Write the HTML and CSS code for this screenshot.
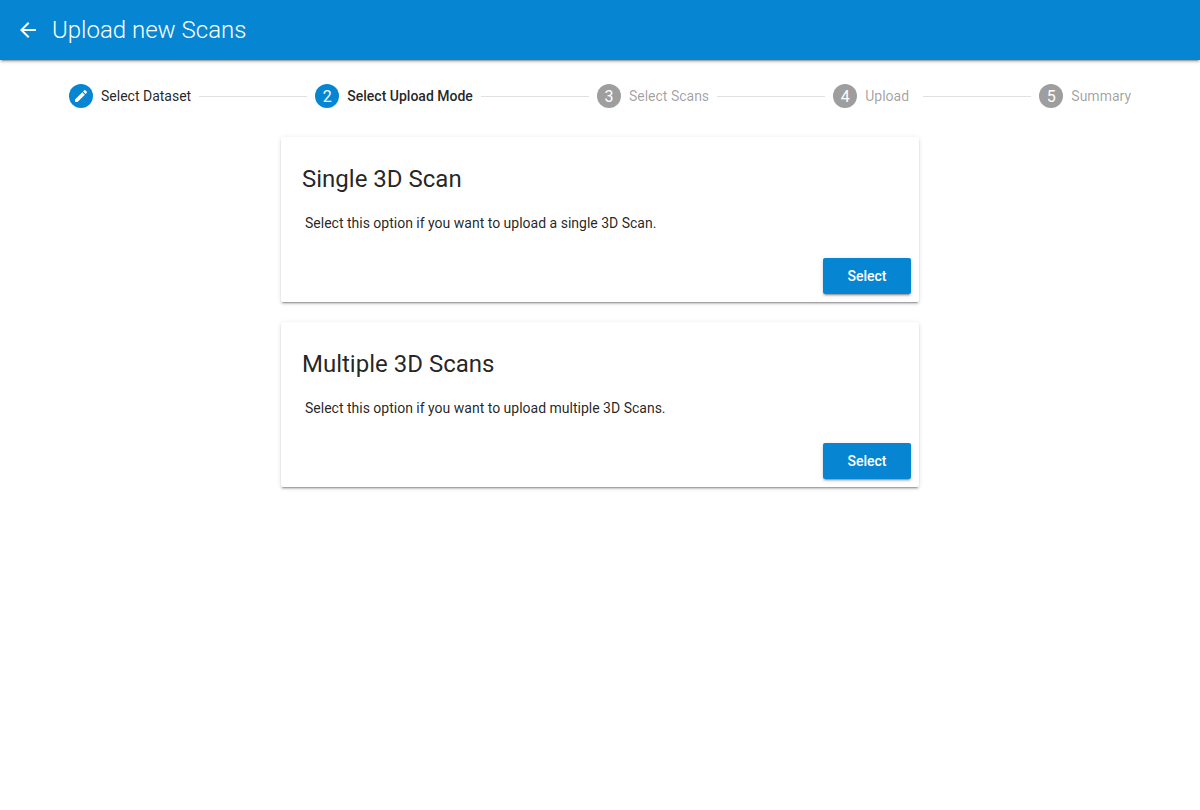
FILE: index.html
```html
<!DOCTYPE html>
<html lang="en">
<head>
<meta charset="utf-8">
<meta name="viewport" content="width=device-width, initial-scale=1">
<title>Upload new Scans</title>
<link rel="stylesheet" href="styles.css">
</head>
<body>
<header class="app-bar">
  <button class="back" type="button" aria-label="Back"><svg viewBox="0 0 24 24"><path d="M20 11H7.83l5.59-5.59L12 4l-8 8 8 8 1.41-1.41L7.83 13H20v-2z"/></svg></button>
  <h1 class="app-title">Upload new Scans</h1>
</header>
<main>
  <ol class="stepper">
    <li class="step done"><span class="badge"><svg viewBox="0 0 24 24"><path d="M3 17.25V21h3.75L17.81 9.94l-3.75-3.75L3 17.25zM20.71 7.04c.39-.39.39-1.02 0-1.41l-2.34-2.34a.996.996 0 0 0-1.41 0l-1.83 1.83 3.75 3.75 1.83-1.83z"/></svg></span><span class="label">Select Dataset</span></li>
    <li class="line" role="presentation"></li>
    <li class="step active" aria-current="step"><span class="badge">2</span><span class="label">Select Upload Mode</span></li>
    <li class="line" role="presentation"></li>
    <li class="step"><span class="badge">3</span><span class="label">Select Scans</span></li>
    <li class="line" role="presentation"></li>
    <li class="step"><span class="badge">4</span><span class="label">Upload</span></li>
    <li class="line" role="presentation"></li>
    <li class="step"><span class="badge">5</span><span class="label">Summary</span></li>
  </ol>
  <div class="cards">
    <section class="card">
      <h2 class="card-title">Single 3D Scan</h2>
      <p class="card-text">Select this option if you want to upload a single 3D Scan.</p>
      <div class="card-actions"><button class="select" type="button">Select</button></div>
    </section>
    <section class="card">
      <h2 class="card-title">Multiple 3D Scans</h2>
      <p class="card-text">Select this option if you want to upload multiple 3D Scans.</p>
      <div class="card-actions"><button class="select" type="button">Select</button></div>
    </section>
  </div>
</main>
</body>
</html>
```
FILE: styles.css
```css
* { box-sizing: border-box; }
body {
  margin: 0;
  background: #fff;
  color: rgba(0, 0, 0, 0.87);
  font-family: Roboto, "Liberation Sans", sans-serif;
  font-size: 14px;
}
.app-bar, .card, .select {
  box-shadow: 0 3px 1px -2px rgba(0, 0, 0, 0.2), 0 2px 2px 0 rgba(0, 0, 0, 0.14), 0 1px 5px 0 rgba(0, 0, 0, 0.12);
}
.app-bar {
  display: flex;
  align-items: center;
  height: 60px;
  padding: 0 16px;
  gap: 12px;
  background: #0686d2;
  color: #fff;
}
.back {
  display: flex;
  padding: 0;
  border: 0;
  background: none;
  color: inherit;
  cursor: pointer;
}
.back svg { width: 24px; height: 24px; fill: currentColor; }
.app-title { margin: 0; font-size: 24px; font-weight: 300; line-height: 32px; }
.stepper {
  display: flex;
  align-items: center;
  height: 72px;
  margin: 0 61px;
  padding: 0;
  list-style: none;
}
.step {
  display: flex;
  flex-shrink: 0;
  align-items: center;
  gap: 8px;
  min-width: 98px;
  padding: 0 8px;
  color: rgba(0, 0, 0, 0.38);
}
.label { line-height: 20px; white-space: nowrap; }
.done, .active { color: rgba(0, 0, 0, 0.87); }
.active { font-weight: 500; }
.badge {
  display: flex;
  align-items: center;
  justify-content: center;
  width: 24px;
  height: 24px;
  border-radius: 50%;
  background: #9e9e9e;
  color: #fff;
  font-size: 16px;
  font-weight: 400;
}
.done .badge, .active .badge { background: #0686d2; }
.badge svg { width: 16px; height: 16px; fill: currentColor; }
.line { flex: 1; height: 1px; background: #e0e0e0; }
.cards {
  display: flex;
  flex-direction: column;
  gap: 20px;
  max-width: 638px;
  margin: 5px auto 20px;
}
.card {
  padding: 21px 8px 8px;
  border-radius: 2px;
  background: #fff;
}
.card-title { margin: 0 13px; font-size: 24px; font-weight: 400; line-height: 42px; }
.card-text { margin: 13px 16px 25px; line-height: 20px; }
.card-actions { display: flex; justify-content: flex-end; }
.select {
  height: 36px;
  min-width: 88px;
  padding: 0 24px;
  border: 0;
  border-radius: 2px;
  background: #0686d2;
  color: #fff;
  font: 500 14px/20px Roboto, "Liberation Sans", sans-serif;
  cursor: pointer;
}
```
